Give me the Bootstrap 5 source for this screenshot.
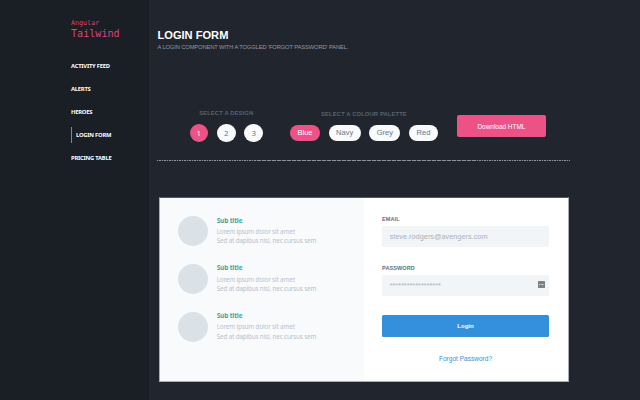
<!DOCTYPE html>
<html lang="en">
<head>
<meta charset="utf-8">
<title>Angular Tailwind</title>
<link href="https://cdn.jsdelivr.net/npm/bootstrap@5.3.0/dist/css/bootstrap.min.css" rel="stylesheet">
<style>
html{font-size:16px}
body{width:640px;height:400px;overflow:hidden;background:#21252d;font-family:"Liberation Sans",Arial,sans-serif;line-height:1}
a{text-decoration:none}
.sidebar{width:148.5px;height:400px;background:#1a1e25;padding:19px 0 0 71px}
.brand{font-family:"DejaVu Sans Mono",monospace;color:#d64780}
.brand-top{font-size:6.7px;line-height:8px}
.brand-main{font-size:10.1px;line-height:13px}
.menu{padding-top:14.5px}
.menu a{font:700 5.8px/23px "Noto Sans",sans-serif;letter-spacing:-.22px;color:#fff;padding:0;width:max-content}
.menu .active{border-left:1px solid #ed5286;line-height:16px;margin:3.5px 0;padding-left:4px}
.content-area{padding:28px 0 0 8.5px}
.page-title{font-size:11.1px;line-height:14px;font-weight:700;color:#fff;padding-left:.5px}
.page-note{font-size:5.75px;letter-spacing:-.11px;line-height:11px;color:#9499a1;padding-left:.5px}
.controls{width:413px;height:105px;padding:55px 0 0 32.5px;margin-top:2px}
.dash-line{width:413px;height:1px;background:repeating-linear-gradient(90deg,#8d9298 0 1.5px,#3a3f47 1.5px 2.5px)}
.group-label{font-size:5.8px;line-height:8px;font-weight:700;letter-spacing:.14px;color:#566470}
.design{width:73.5px}
.design .group-label{margin-top:-1px}
.design .choice{width:18.6px;height:18.6px;font:7.9px/18.6px "Noto Sans",sans-serif}
.palette{width:148px;margin-left:27px}
.choice-row{margin-top:6.5px}
.choice{background:#f8fafc;color:#68788a;text-align:center;border-radius:20px;font-size:7.5px;line-height:16px;height:16px;padding:0;border:0}
.choice.on{background:#ed5286;color:#fff}
.w-blue{width:30px}.w-navy{width:32px}.w-grey{width:31px}.w-red{width:29px}
.download{width:88.5px;height:22px;margin:5px 0 0 19.2px;border-radius:2px;background:#ed5286;color:#fff;font-size:6.45px;padding:0;border:0;line-height:23px}
.login-card{width:410px;height:185px;margin:36px 0 0 1.5px;background:#fff;border:1px solid #aaadb2;border-top-color:#53575e}
.login-info{width:204.5px;flex-shrink:0;background:#f8fafc;padding:18px 0 0 18px}
.info-row{height:47.8px}
.avatar-dot{width:30px;height:30px;background:#dae1e7}
.info-text{font-family:"Noto Sans",sans-serif;font-size:6.3px;letter-spacing:-.14px;line-height:9.3px;color:#b8c2cc;margin:-.5px 0 0 9.2px;white-space:nowrap}
.info-text strong{display:block;font-size:6.4px;letter-spacing:-.1px;color:#38a89d;line-height:10px;margin-bottom:1.3px}
.login-form{width:203.5px;flex-shrink:0;padding:17px 18.5px 0 18px}
.field-label{display:block;font-size:5.5px;line-height:8px;font-weight:700;color:#606f7b;letter-spacing:.12px;margin-bottom:3px}
.field-gap{margin-top:17px}
.field-box{height:21px;background:#f1f5f8;border:0;border-radius:1.5px;padding:0 7.5px;font-size:7.35px;color:#a7b1bb}
.field-box::placeholder{color:#a9b3bc;opacity:1}
#pass{padding-bottom:1px}
.key-icon{right:4.5px;top:6px;width:7px;height:7px}
.login-btn{height:22px;margin-top:18.5px;background:#3490dc;color:#fff;border:0;border-radius:1.5px;font-size:6px;font-weight:700;padding:0;line-height:22px}
.forgot{font-size:6.55px;color:#3490dc;line-height:10px;margin-top:17.5px}
</style>
</head>
<body>
<div class="d-flex">
  <aside class="sidebar flex-shrink-0">
    <a class="brand d-block" href="#"><div class="brand-top">Angular</div><div class="brand-main">Tailwind</div></a>
    <nav class="menu nav flex-column">
      <a class="nav-link" href="#">ACTIVITY FEED</a>
      <a class="nav-link" href="#">ALERTS</a>
      <a class="nav-link" href="#">HEROES</a>
      <a class="nav-link active" href="#">LOGIN FORM</a>
      <a class="nav-link" href="#">PRICING TABLE</a>
    </nav>
  </aside>
  <main class="content-area flex-grow-1">
    <h1 class="page-title m-0">LOGIN FORM</h1>
    <p class="page-note m-0">A LOGIN COMPONENT WITH A TOGGLED 'FORGOT PASSWORD' PANEL.</p>
    <section class="controls d-flex align-items-start">
      <div class="design">
        <div class="group-label text-center text-nowrap">SELECT A DESIGN</div>
        <div class="choice-row d-flex justify-content-between">
          <button class="choice on">1</button><button class="choice">2</button><button class="choice">3</button>
        </div>
      </div>
      <div class="palette">
        <div class="group-label text-center text-nowrap">SELECT A COLOUR PALETTE</div>
        <div class="choice-row d-flex justify-content-between">
          <button class="choice on w-blue">Blue</button><button class="choice w-navy">Navy</button><button class="choice w-grey">Grey</button><button class="choice w-red">Red</button>
        </div>
      </div>
      <button class="btn download">Download HTML</button>
    </section>
    <div class="dash-line"></div>
    <section class="login-card d-flex">
      <div class="login-info">
        <div class="info-row d-flex"><span class="avatar-dot rounded-circle"></span><div class="info-text"><strong>Sub title</strong>Lorem ipsum dolor sit amet<br>Sed at dapibus nisi, nec cursus sem</div></div>
        <div class="info-row d-flex"><span class="avatar-dot rounded-circle"></span><div class="info-text"><strong>Sub title</strong>Lorem ipsum dolor sit amet<br>Sed at dapibus nisi, nec cursus sem</div></div>
        <div class="info-row d-flex"><span class="avatar-dot rounded-circle"></span><div class="info-text"><strong>Sub title</strong>Lorem ipsum dolor sit amet<br>Sed at dapibus nisi, nec cursus sem</div></div>
      </div>
      <form class="login-form">
        <label class="field-label" for="email">EMAIL</label>
        <input class="field-box d-block w-100" id="email" type="text" placeholder="steve.rodgers@avengers.com">
        <label class="field-label field-gap" for="pass">PASSWORD</label>
        <div class="position-relative">
          <input class="field-box d-block w-100" id="pass" type="password" placeholder="******************">
          <svg class="key-icon position-absolute" viewBox="0 0 14 14"><rect width="14" height="14" rx="1" fill="#7f8183"/><path d="M2 7h10" stroke="#d5d7d9" stroke-width="2" stroke-dasharray="2 1"/></svg>
        </div>
        <button class="btn login-btn w-100 d-block" type="button">Login</button>
        <a class="forgot d-block text-center" href="#">Forgot Password?</a>
      </form>
    </section>
  </main>
</div>
<script src="https://cdn.jsdelivr.net/npm/bootstrap@5.3.0/dist/js/bootstrap.bundle.min.js"></script>
</body>
</html>
